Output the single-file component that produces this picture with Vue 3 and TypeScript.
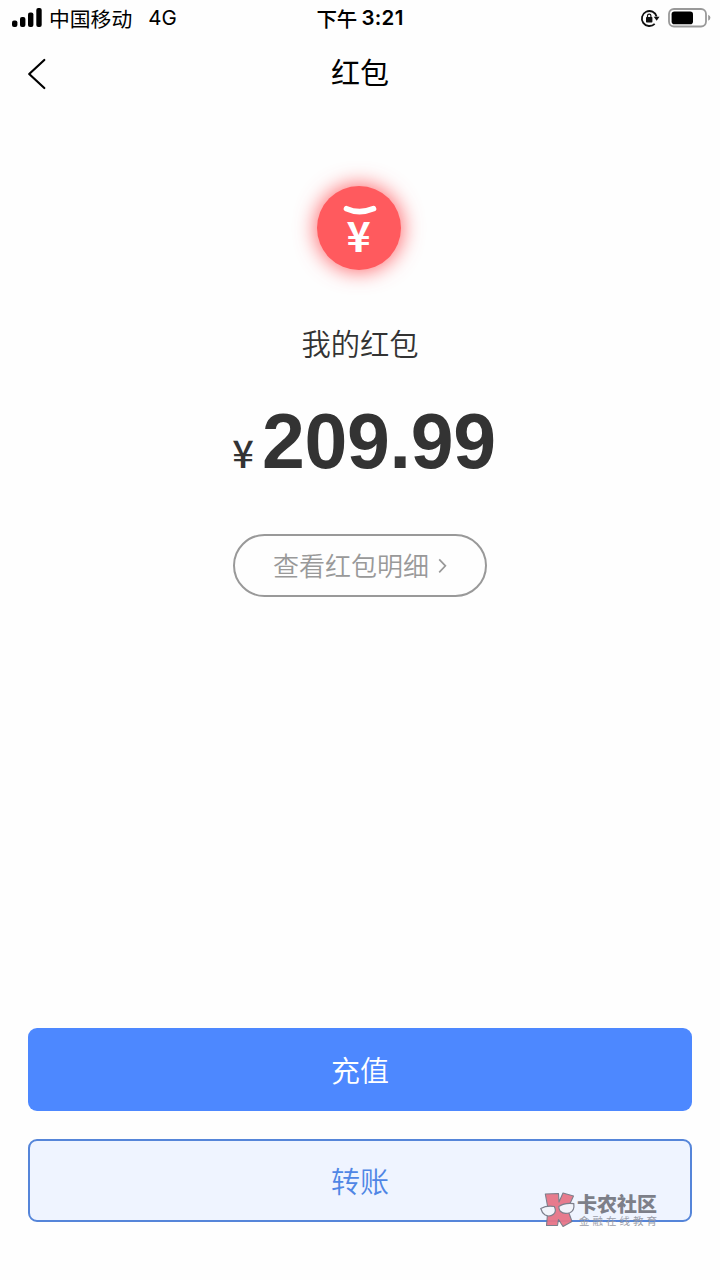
<script setup lang="ts">
const carrier: string = '中国移动'
const network: string = '4G'
const amount: string = '209.99'
const bars: { x: number; h: number }[] = [
  { x: 0, h: 6.5 },
  { x: 8, h: 10 },
  { x: 16, h: 14.5 },
  { x: 24.3, h: 19 },
]
</script>

<template>
  <div class="page">
    <header class="status">
      <div class="left">
        <svg class="signal" width="31" height="20" viewBox="0 0 31 20">
          <rect v-for="b in bars" :key="b.x" :x="b.x" :y="19 - b.h" width="5.4" :height="b.h" rx="2" />
        </svg>
        <span class="carrier">{{ carrier }}</span>
        <span class="network">{{ network }}</span>
      </div>
      <div class="time"><span class="ampm">下午</span><span class="clock">3:21</span></div>
      <div class="right">
        <svg width="20" height="20" viewBox="0 0 20 20">
          <path d="M14.7 15.8A7.5 7.5 0 1 1 16.6 8.5" fill="none" stroke="#111" stroke-width="1.8" />
          <path d="M13.7 8.8h5.8l-2.8 4z" fill="#111" />
          <rect x="6" y="9" width="6.4" height="5.400" rx=".7" fill="#111" />
          <path d="M7.500 9.500V7.800a1.700 1.700 0 0 1 3.400 0v1.700" fill="none" stroke="#111" stroke-width="1.2" />
        </svg>
        <svg class="battery" width="43" height="20" viewBox="0 0 43 20">
          <rect x="1" y="1" width="37" height="17.5" rx="5" fill="none" stroke="#999" stroke-width="1.8" />
          <rect x="3.6" y="3.6" width="21.4" height="12.6" rx="2.8" fill="#000" />
          <path d="M40.2 6.8q2.2.8 2.2 3t-2.2 3z" fill="#999" />
        </svg>
      </div>
    </header>

    <nav class="nav">
      <svg class="back" width="20" height="32" viewBox="0 0 20 32">
        <path d="M17.3 2L2.2 16l15.1 14" fill="none" stroke="#000" stroke-width="2.2" stroke-linecap="round" stroke-linejoin="round" />
      </svg>
      <h1>红包</h1>
    </nav>

    <main class="content">
      <div class="badge">
        <svg width="84" height="84" viewBox="0 0 84 84">
          <path d="M29.5 22.7q12.700 5.800 27 0" fill="none" stroke="#fff" stroke-width="5.6" stroke-linecap="round" />
          <text class="yen-icon" x="41.5" y="66" text-anchor="middle">¥</text>
        </svg>
      </div>
      <p class="label">我的红包</p>
      <div class="balance"><span class="currency">¥</span><span class="amount">{{ amount }}</span></div>
      <button class="details">
        <span>查看红包明细</span>
        <svg width="9" height="16" viewBox="0 0 9 16">
          <path d="M1.2 1.3l6.2 6.5-6.2 6.5" fill="none" stroke="#999" stroke-width="1.7" />
        </svg>
      </button>
    </main>

    <footer class="actions">
      <button class="primary"><span>充值</span></button>
      <button class="secondary"><span>转账</span></button>
    </footer>

    <div class="watermark">
      <svg width="37" height="38" viewBox="0 0 37 38">
        <path d="M5.300 3L18.500 2.500l.5 8.500L23 2l10.500 3L27.500 18l4.500 12.500-9 5-4.500-7-1 6H6.500L8 17.500z" fill="#e77587" stroke="#777986" stroke-width="1.1" stroke-linejoin="round" />
        <g fill="#f3f5fb" stroke="#777986" stroke-width="1.2">
          <path d="M.800 17.500q6-3.300 13.500-2 2.500 5-.8 7.700-4.200 3.300-8.700.6Q2 22 .800 17.500z" />
          <path d="M18.800 15.500q6-4 15-2.800 1 7-4 9-6 1.800-9.500-1.400-1.500-1.800-1.500-4.800z" />
        </g>
      </svg>
      <div class="mark-text">
        <span class="mark-title">卡农社区</span>
        <span class="mark-sub">金融在线教育</span>
      </div>
    </div>
  </div>
</template>

<style>
body {
  background: #fefefe;
}
</style>

<style scoped>
.page {
  position: relative;
  width: 720px;
  height: 1280px;
  overflow: hidden;
  display: flex;
  flex-direction: column;
  background: #fefefe;
  color: #333;
  font-family: "Liberation Sans", "Noto Sans CJK SC", sans-serif;
}
button {
  box-sizing: border-box;
  margin: 0;
  font-family: "Noto Sans CJK SC", sans-serif;
  font-weight: 350;
}
.status {
  display: grid;
  grid-template-columns: 1fr auto 1fr;
  align-items: center;
  height: 36px;
  padding: 0 9px 0 12px;
  color: #000;
}
.left,
.right,
.time {
  display: flex;
  align-items: center;
}
.carrier {
  margin-left: 6px;
  font: 400 20.8px/36px "Noto Sans CJK SC", sans-serif;
}
.network {
  margin-left: 16px;
  font: 400 20.5px/36px Inter, sans-serif;
}
.time {
  padding-right: 3px;
}
.ampm {
  font: 500 20.5px/36px "Noto Sans CJK SC", sans-serif;
}
.clock {
  margin-left: 4px;
  font: 600 20.5px/36px Inter, sans-serif;
  letter-spacing: 0.3px;
}
.right {
  justify-content: flex-end;
  gap: 8px;
}
.nav {
  display: grid;
  grid-template-columns: 28px 1fr 28px;
  align-items: center;
  height: 76px;
  padding: 0 27px;
}
h1 {
  margin: -6px 0 0;
  color: #000;
  text-align: center;
  font: 400 29px/70px "Noto Sans CJK SC", sans-serif;
}
.content {
  flex: 1;
  display: flex;
  flex-direction: column;
  align-items: center;
}
.badge {
  width: 84px;
  height: 84px;
  margin: 74px 2px 0 0;
  border-radius: 50%;
  background: #ff5a5e;
  box-shadow: 0 0 20px 2px rgba(255, 75, 80, 0.8);
}
.badge svg {
  display: block;
}
.yen-icon {
  fill: #fff;
  font: 700 41px "Noto Sans CJK SC", sans-serif;
}
.label {
  margin: 50px 0 0;
  font: 350 29.3px/44px "Noto Sans CJK SC", sans-serif;
}
.balance {
  display: flex;
  align-items: baseline;
  height: 88px;
  margin: 33px 0 0 8px;
}
.currency {
  margin-right: 8px;
  font: 500 38px/60px "Noto Sans CJK SC", sans-serif;
}
.amount {
  font: 700 77px/88px "Liberation Sans", sans-serif;
  letter-spacing: -0.3px;
}
.details {
  display: flex;
  align-items: center;
  justify-content: center;
  gap: 9px;
  width: 254px;
  height: 63px;
  margin-top: 49px;
  padding: 0;
  border: 2px solid #999;
  border-radius: 32px;
  background: transparent;
  color: #999;
  font-size: 26px;
}
.details span {
  margin-top: -3px;
}
.actions {
  display: flex;
  flex-direction: column;
  gap: 28px;
  padding: 0 28px 58px;
}
.actions button {
  height: 83px;
  padding: 0 0 1px;
  border-radius: 9px;
  font-size: 29px;
}
.primary {
  border: 0;
  background: #4d88ff;
  color: #fff;
}
.secondary {
  border: 2px solid #5585d9;
  background: #eff4ff;
  color: #5086e5;
}
.watermark {
  position: absolute;
  left: 540px;
  top: 1191px;
  display: flex;
  opacity: 0.95;
}
.mark-text {
  display: flex;
  flex-direction: column;
  color: #777983;
  font-family: "Noto Sans CJK SC", sans-serif;
}
.mark-title {
  font-size: 20px;
  line-height: 25px;
  font-weight: 900;
}
.mark-sub {
  margin-left: 2px;
  color: #9699a5;
  font-size: 10.5px;
  line-height: 9px;
  letter-spacing: 3px;
}
</style>
